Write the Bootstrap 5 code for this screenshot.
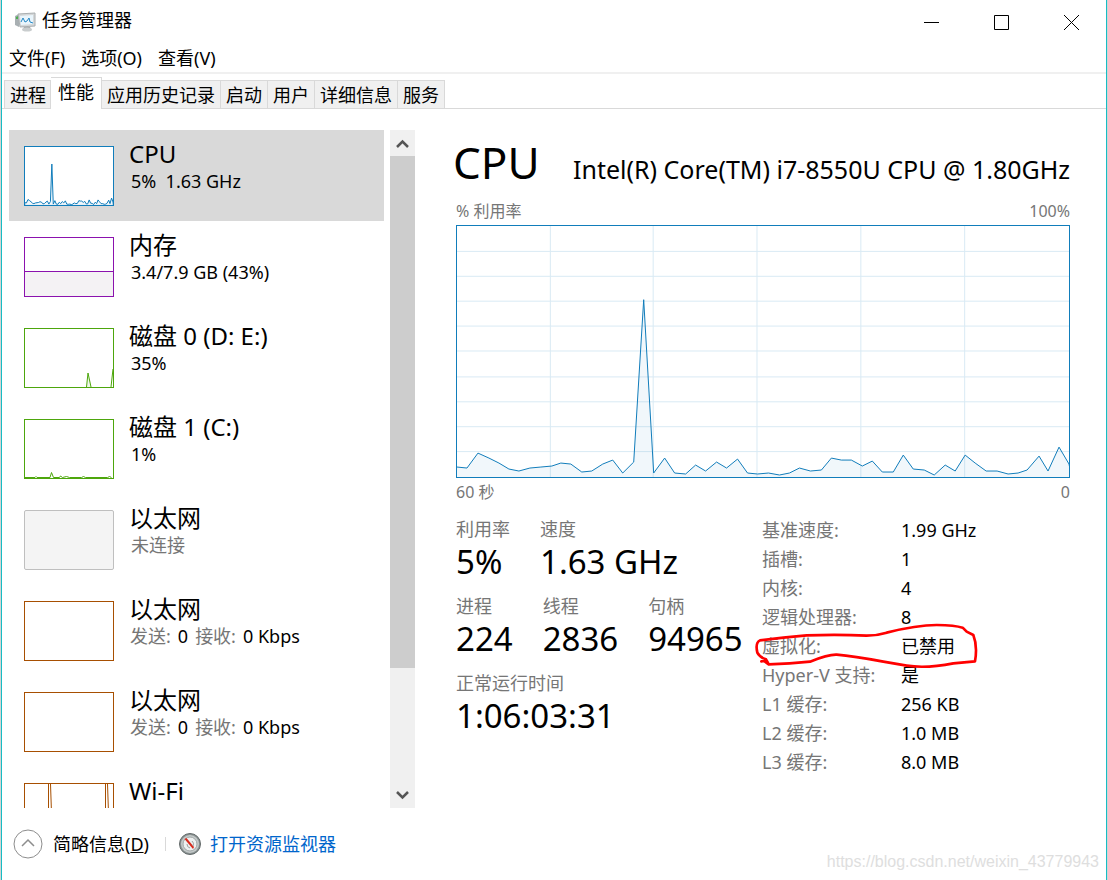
<!DOCTYPE html>
<html lang="zh-CN">
<head>
<meta charset="utf-8">
<meta name="viewport" content="width=device-width, initial-scale=1">
<title>任务管理器</title>
<link rel="stylesheet" href="https://cdn.jsdelivr.net/npm/bootstrap@5.3.0/dist/css/bootstrap.min.css">
<style>
  body { background: #d3d3d3; color: #000; font: 400 18px/26px "Noto Sans", "Noto Sans CJK SC", sans-serif; }
  .window { height: 100vh; min-height: 820px; margin: 0 1px; background: #fff; border: solid #17bcc4; border-width: 0 1px; }
  button { font: inherit; color: inherit; background: none; border: 0; padding: 0; }
  .dim { color: #767676; }
  .titlebar { height: 44px; padding-left: 13px; gap: 6px; line-height: 24px; }
  .caption-btn { width: 70px; height: 44px; line-height: 0; }
  .menubar { height: 30px; padding: 0 7px; gap: 16px; border-bottom: 2px solid #f0f0f0; }
  .tabs { height: 35px; padding-left: 2px; border-bottom: 1px solid #d9d9d9; }
  .tabs button { height: 28px; padding: 0 5px; background: #f0f0f0; border: solid #d9d9d9; border-width: 1px 1px 0 0; }
  .tabs button:first-child { border-left-width: 1px; padding: 0 4px 0 5px; }
  .tabs button.active { height: 32px; padding: 0 7px 4px; margin-bottom: -1px; background: #fff; }
  .content { padding-top: 21px; }
  .sidebar { width: 413px; padding-left: 7px; gap: 6px; }
  .resource { height: 91px; padding: 15px 15px 0; gap: 15px; text-align: left; }
  .resource.selected { background: #d9d9d9; }
  .resource .name { font-size: 24px; line-height: 28px; margin-top: -5px; }
  .resource .info { padding-left: 2px; white-space: nowrap; }
  .resource .rate { gap: 7px; padding-left: 1px; }
  .thumb { width: 90px; height: 60px; margin-top: 1px; background: #fff; border: 1px solid; }
  .thumb svg, .plot svg { display: block; width: 100%; height: 100%; }
  .c-cpu { color: #117dbb; } .c-mem { color: #8b12ae; } .c-disk { color: #4da60c; } .c-net { color: #a74f01; }
  .c-off { color: #bfbfbf; background: #f4f4f4; border-radius: 2px; }
  .scroller { width: 25px; background: #f0f0f0; }
  .scroller button { height: 26px; line-height: 0; }
  .scroller .handle { flex: 0 0 75.5%; background: #cdcdcd; margin-bottom: auto; }
  .detail { padding: 0 36px 0 41px; }
  .headline { height: 67px; }
  .headline h1 { font-size: 44px; line-height: 64px; font-weight: 400; margin: 0 0 0 -3px; }
  .headline h2 { font-size: 25px; line-height: 32px; font-weight: 400; margin: 0; white-space: nowrap; }
  .axis { font-size: 16px; line-height: 28px; }
  .plot { height: 253px; border: 1px solid #117dbb; }
  .stats { padding-top: 9px; }
  .figures { width: 306px; padding-top: 2px; }
  .figures dl { gap: 30px; margin: 0; height: 77px; }
  .figures dt { font-weight: 400; line-height: 24px; }
  .figures dd { margin: 0; font-size: 33px; line-height: 42px; white-space: nowrap; }
  .specs th { width: 139px; font-weight: 400; }
  .specs th, .specs td { height: 29px; padding: 0; white-space: nowrap; line-height: 26px; }
  .circled { left: -8px; top: 108px; width: 224px; height: 46px; }
  .footbar { height: 72px; padding-left: 11px; }
  .footbar button { gap: 10px; }
  .footbar a { color: #0066cc; text-decoration: none; }
  .divider { width: 1px; height: 14px; background: #d9d9d9; margin: 0 12px 0 16px; }
  .watermark { font: 16px/20px "Liberation Sans", sans-serif; color: #dedede; padding: 0 7px 8px 0; }
</style>
</head>
<body>
<div class="window d-flex flex-column overflow-hidden">
  <header class="titlebar d-flex align-items-center flex-shrink-0">
    <svg width="21" height="20" viewBox="0 0 21 20" aria-hidden="true">
      <path d="M0 4l4-2v13l-4-2z" fill="#a9b0b3"/><path d="M1 5l2-1v3H1z" fill="#4caf50"/>
      <path d="M3 2l17-1v13L5 15z" fill="#d5d8d9" stroke="#a9aeb0"/>
      <path d="M5 4l13-1v9L6 13z" fill="#e9f5fc"/>
      <path d="M6 10l2-4 2 4 2-1 2-3 1 4 3 1" fill="none" stroke="#2387c5"/>
      <path d="M9 15h6l1 2H8z" fill="#a4a9ab"/><ellipse cx="12" cy="17.500" rx="5" ry="2" fill="#c9cdce"/>
    </svg>
    <span class="me-auto pb-1">任务管理器</span>
    <div class="d-flex">
      <button class="caption-btn" aria-label="最小化"><svg width="15" height="15"><path d="M0 7.500h15" stroke="#000"/></svg></button>
      <button class="caption-btn" aria-label="最大化"><svg width="15" height="15"><path d="M.5.5h14v14H.5z" fill="none" stroke="#000"/></svg></button>
      <button class="caption-btn" aria-label="关闭"><svg width="15" height="15"><path d="M0 0l15 15M15 0L0 15" stroke="#000"/></svg></button>
    </div>
  </header>
  <nav class="menubar d-flex align-items-center flex-shrink-0">
    <button>文件(F)</button><button>选项(O)</button><button>查看(V)</button>
  </nav>
  <nav class="tabs d-flex align-items-end flex-shrink-0">
    <button>进程</button><button class="active">性能</button><button>应用历史记录</button><button>启动</button><button>用户</button><button>详细信息</button><button>服务</button>
  </nav>

  <main class="content d-flex flex-grow-1 overflow-hidden">
    <aside class="sidebar d-flex flex-shrink-0">
      <div class="flex-grow-1 d-flex flex-column overflow-hidden">
        <button class="resource selected d-flex flex-shrink-0">
          <span class="thumb c-cpu"><svg viewBox="0 0 613 252" preserveAspectRatio="none"><use href="#load"/></svg></span>
          <span><span class="name d-block">CPU</span><span class="info d-block">5%&nbsp; 1.63 GHz</span></span>
        </button>
        <button class="resource d-flex flex-shrink-0">
          <span class="thumb c-mem"><svg viewBox="0 0 88 58"><path d="M-1 33.500h90V60H-1z" fill="#f4f2f4" stroke="currentColor"/></svg></span>
          <span><span class="name d-block">内存</span><span class="info d-block">3.4/7.9 GB (43%)</span></span>
        </button>
        <button class="resource d-flex flex-shrink-0">
          <span class="thumb c-disk"><svg viewBox="0 0 88 58"><path d="M61.500 58l1.500-14 3 14M86 58l2-18" fill="#eff7e9" stroke="currentColor"/></svg></span>
          <span><span class="name d-block">磁盘 0 (D: E:)</span><span class="info d-block">35%</span></span>
        </button>
        <button class="resource d-flex flex-shrink-0">
          <span class="thumb c-disk"><svg viewBox="0 0 88 58"><path d="M0 57.500h10l1-1 1 1h13l1.500-5 2 5h6l1-1.500 2 1.500 4-1 3 1h12l2-1 2 1h22l2-1 2 1" fill="none" stroke="currentColor"/></svg></span>
          <span><span class="name d-block">磁盘 1 (C:)</span><span class="info d-block">1%</span></span>
        </button>
        <button class="resource d-flex flex-shrink-0">
          <span class="thumb c-off"></span>
          <span><span class="name d-block">以太网</span><span class="info dim d-block">未连接</span></span>
        </button>
        <button class="resource d-flex flex-shrink-0">
          <span class="thumb c-net"></span>
          <span><span class="name d-block">以太网</span><span class="info rate d-flex"><span class="dim">发送:</span><span>0</span><span class="dim">接收:</span><span>0 Kbps</span></span></span>
        </button>
        <button class="resource d-flex flex-shrink-0">
          <span class="thumb c-net"></span>
          <span><span class="name d-block">以太网</span><span class="info rate d-flex"><span class="dim">发送:</span><span>0</span><span class="dim">接收:</span><span>0 Kbps</span></span></span>
        </button>
        <button class="resource d-flex flex-shrink-0">
          <span class="thumb c-net"><svg viewBox="0 0 88 58"><path d="M23.500 58V0M25.500 0l2 58M80.500 58V0M82.500 0l2 58" fill="none" stroke="currentColor"/></svg></span>
          <span><span class="name d-block">Wi-Fi</span></span>
        </button>
      </div>
      <div class="scroller d-flex flex-column">
        <button aria-label="向上滚动"><svg width="13" height="9"><path d="M1 8l5.500-5.500L12 8" fill="none" stroke="#555" stroke-width="2.500"/></svg></button>
        <div class="handle"></div>
        <button aria-label="向下滚动"><svg width="13" height="9"><path d="M1 1l5.500 5.500L12 1" fill="none" stroke="#555" stroke-width="2.500"/></svg></button>
      </div>
    </aside>

    <section class="detail flex-grow-1">
      <div class="headline d-flex justify-content-between align-items-baseline">
        <h1>CPU</h1><h2>Intel(R) Core(TM) i7-8550U CPU @ 1.80GHz</h2>
      </div>
      <div class="axis dim d-flex justify-content-between"><span>% 利用率</span><span>100%</span></div>
      <div class="plot">
        <svg viewBox="0 0 613 252" preserveAspectRatio="none" role="img" aria-label="CPU 利用率">
          <path d="M93.500 0v252M196.500 0v252M300.500 0v252M404.500 0v252M508.500 0v252M0 25.500h613M0 50.500h613M0 75.500h613M0 100.500h613M0 125.500h613M0 151.500h613M0 176.500h613M0 201.500h613M0 226.500h613" stroke="#d9eaf4" fill="none"/>
          <path id="load" d="M-2 254V242L0 242L10 243L21 228L32 233L42 238L52 244L62 246L73 243L84 242L95 241L104 238L114 239L125 247L135 246L146 239L156 235L166 248L177 237L187 74L197 248L208 233L218 248L229 249L239 240L249 246L260 237L270 243L281 234L291 248L301 249L312 248L323 250L333 248L343 243L354 246L365 245L375 233L385 235L395 235L406 241L416 236L426 247L437 247L447 230L457 244L468 245L478 250L489 240L499 246L509 230L519 238L530 246L541 246L552 249L562 248L571 245L583 231L592 246L603 222L613 239L616 254Z" fill="#117dbb" fill-opacity=".06" stroke="#117dbb" vector-effect="non-scaling-stroke"/>
        </svg>
      </div>
      <div class="axis dim d-flex justify-content-between"><span>60 秒</span><span>0</span></div>
      <div class="stats d-flex">
        <div class="figures flex-shrink-0">
          <dl class="d-flex"><div><dt class="dim">利用率</dt><dd>5%</dd></div><div><dt class="dim">速度</dt><dd>1.63 GHz</dd></div></dl>
          <dl class="d-flex"><div><dt class="dim">进程</dt><dd>224</dd></div><div><dt class="dim">线程</dt><dd>2836</dd></div><div><dt class="dim">句柄</dt><dd>94965</dd></div></dl>
          <dl class="d-flex"><div><dt class="dim">正常运行时间</dt><dd>1:06:03:31</dd></div></dl>
        </div>
        <div class="position-relative">
          <table class="specs">
            <tr><th class="dim" scope="row">基准速度:</th><td>1.99 GHz</td></tr>
            <tr><th class="dim" scope="row">插槽:</th><td>1</td></tr>
            <tr><th class="dim" scope="row">内核:</th><td>4</td></tr>
            <tr><th class="dim" scope="row">逻辑处理器:</th><td>8</td></tr>
            <tr><th class="dim" scope="row">虚拟化:</th><td>已禁用</td></tr>
            <tr><th class="dim" scope="row">Hyper-V 支持:</th><td>是</td></tr>
            <tr><th class="dim" scope="row">L1 缓存:</th><td>256 KB</td></tr>
            <tr><th class="dim" scope="row">L2 缓存:</th><td>1.0 MB</td></tr>
            <tr><th class="dim" scope="row">L3 缓存:</th><td>8.0 MB</td></tr>
          </table>
          <svg class="circled position-absolute" viewBox="42 371 672 138" aria-hidden="true"><path d="M64 486L72 485L86 495Q150 494 210 487Q265 465 290 466Q340 470 430 487L500 499Q560 508 640 492L705 486Q713 440 700 407L680 397L668 385Q645 378 590 377Q530 377 440 400Q410 409 380 409Q300 405 200 408L130 415L60 423Q45 430 52 460Q58 473 78 480L84 491" fill="none" stroke="#f00" stroke-width="8" stroke-linecap="round" stroke-linejoin="round"/></svg>
        </div>
      </div>
    </section>
  </main>

  <footer class="footbar d-flex align-items-center flex-shrink-0">
    <button class="d-flex align-items-center">
      <svg width="30" height="30" viewBox="0 0 30 30" aria-hidden="true"><circle cx="15" cy="15" r="14" fill="none" stroke="#8d8d8d"/><path d="M9 17l6-6 6 6" fill="none" stroke="#8d8d8d" stroke-width="1.500"/></svg>
      <span>简略信息(<u>D</u>)</span>
    </button>
    <span class="divider"></span>
    <svg width="24" height="24" viewBox="0 0 24 24" class="me-2" aria-hidden="true"><circle cx="12" cy="12" r="10.500" fill="#8c9494" stroke="#626969"/><circle cx="12" cy="12" r="9" fill="#c5caca"/><circle cx="12" cy="12" r="7" fill="#edf0f0" stroke="#a0a6a6"/><path d="M6.500 7l2-1 7.500 9-1 2z" fill="#d92a1c"/><path d="M14 9a4 4 0 0 1 1 5M9 12a4 4 0 0 0 3 4" fill="none" stroke="#9a9f9f"/></svg>
    <a href="#">打开资源监视器</a>
    <span class="watermark ms-auto align-self-end">https://blog.csdn.net/weixin_43779943</span>
  </footer>
</div>
<script src="https://cdn.jsdelivr.net/npm/bootstrap@5.3.0/dist/js/bootstrap.bundle.min.js"></script>
</body>
</html>
